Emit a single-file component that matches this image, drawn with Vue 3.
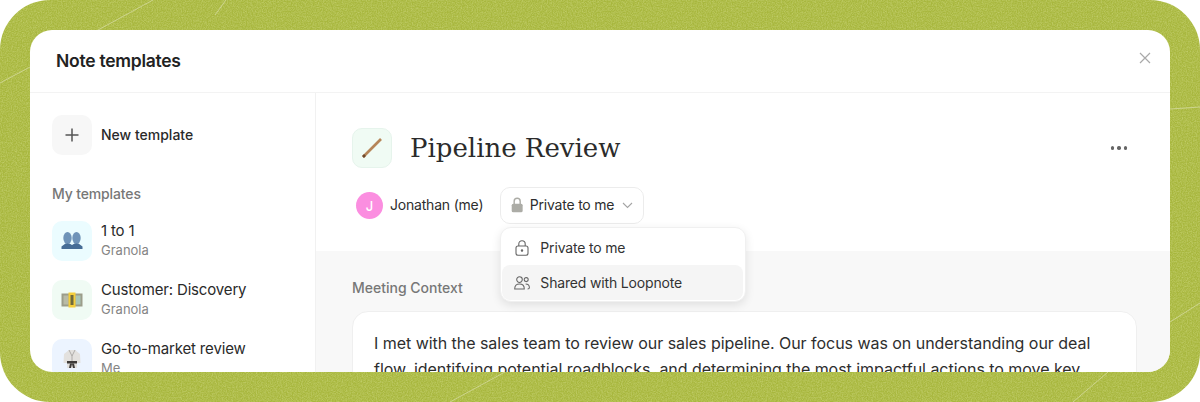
<template>
  <div class="page">
    <svg class="backdrop" width="1200" height="402" aria-hidden="true">
      <filter id="grain" x="0" y="0" width="100%" height="100%">
        <feTurbulence type="fractalNoise" baseFrequency="0.8" numOctaves="2" seed="4" />
        <feColorMatrix type="matrix" values="0 0 0 0 0.95  0 0 0 0 1  0 0 0 0 0.6  1.6 0 0 0 -0.5" />
      </filter>
      <rect width="1200" height="402" filter="url(#grain)" opacity="0.32" />
      <g stroke="#d0d795" stroke-width="0.9" fill="none">
        <path d="M0 83 L30 67" />
        <path d="M98 30 L153 0" />
        <path d="M215 15 L226 0" />
        <path d="M1170 109 L1200 107" />
        <path d="M1170 322 L1200 303" />
        <path d="M1073 402 L1108 372" />
        <path d="M450 402 L505 372" />
      </g>
    </svg>

    <div class="modal">
      <header class="modal-header">
        <h1>Note templates</h1>
        <button class="close" aria-label="Close">
          <svg width="12" height="12" viewBox="0 0 12 12"><path d="M1 1 L11 11 M11 1 L1 11" stroke="#a9a9a9" stroke-width="1.2" fill="none" /></svg>
        </button>
      </header>

      <div class="modal-body">
        <aside class="sidebar">
          <div class="row new-row">
            <div class="tile tile-new">
              <svg width="16" height="16" viewBox="0 0 16 16"><path d="M8 1.5 V14.5 M1.5 8 H14.5" stroke="#555" stroke-width="1.5" fill="none" /></svg>
            </div>
            <span class="new-label">New template</span>
          </div>

          <div class="section-label">My templates</div>

          <div class="template-list">
            <div v-for="t in templates" :key="t.name" class="row">
              <div class="tile" :class="t.tint">
                <svg v-if="t.icon === 'people'" width="22" height="20" viewBox="0 0 22 20">
                  <ellipse cx="6.5" cy="7" rx="4.2" ry="6" fill="#6f93b8" />
                  <ellipse cx="15.5" cy="7" rx="4.2" ry="6" fill="#6f93b8" />
                  <path d="M0.5 18 V15.5 L4.5 12.5 H8.5 L11 14 L13.5 12.5 H17.5 L21.5 15.5 V18 Z" fill="#466d96" />
                </svg>
                <svg v-else-if="t.icon === 'money'" width="22" height="16" viewBox="0 0 22 16">
                  <rect x="0.5" y="1.5" width="21" height="13" fill="#9c9d8a" />
                  <rect x="2.5" y="3.5" width="5" height="9" fill="#b9bba6" />
                  <rect x="14.5" y="3.5" width="5" height="9" fill="#a9c6b6" />
                  <rect x="7.5" y="0.5" width="7" height="15" fill="#f5cf3c" />
                  <rect x="9.5" y="3" width="3" height="10" fill="#6f6a3c" />
                </svg>
                <svg v-else width="18" height="20" viewBox="0 0 18 20">
                  <path d="M6 1 H12 L17 5 L17.5 14 H14 L14 19 H4 L4 14 H0.5 L1 5 Z" fill="#e3e1de" />
                  <path d="M6 1 L9 7 L12 1 M9 7 V13" stroke="#a8a6a3" stroke-width="0.9" fill="none" />
                  <rect x="4" y="12" width="10" height="2.5" fill="#3d3a38" />
                  <path d="M7 14.5 L6 19 H8 L9 15 L10 19 H12 L11 14.5 Z" fill="#3d3a38" />
                </svg>
              </div>
              <div class="meta">
                <div class="name">{{ t.name }}</div>
                <div class="by">{{ t.by }}</div>
              </div>
            </div>
          </div>
        </aside>

        <main class="main">
          <section class="head">
            <div class="title-row">
              <div class="tile tile-mint title-tile">
                <svg width="24" height="24" viewBox="0 0 24 24">
                  <path d="M3 21 L21 3" stroke="#b58558" stroke-width="2.6" fill="none" />
                  <path d="M3 21 L5 19" stroke="#6f4a2c" stroke-width="2.6" fill="none" />
                </svg>
              </div>
              <h2>Pipeline Review</h2>
              <button class="more" aria-label="More">
                <i></i><i></i><i></i>
              </button>
            </div>

            <div class="owner-row">
              <div class="owner">
                <span class="avatar">J</span>
                <span class="owner-name">Jonathan (me)</span>
              </div>
              <div class="picker">
                <button class="pill">
                  <svg width="14" height="18" viewBox="0 0 14 18">
                    <path d="M3.6 8 V4.8 a3.4 3.4 0 0 1 6.8 0 V8" stroke="#acaca6" stroke-width="1.6" fill="none" />
                    <rect x="0.8" y="7.5" width="12.4" height="9.8" rx="1.8" fill="#acaca6" />
                  </svg>
                  <span class="pill-text">Private to me</span>
                  <svg class="chev" width="11" height="7" viewBox="0 0 11 7"><path d="M1 1 L5.5 5.5 L10 1" stroke="#a5a5a5" stroke-width="1.1" fill="none" /></svg>
                </button>
                <div class="menu">
                  <div class="menu-item">
                    <svg width="16" height="16" viewBox="0 0 16 16" fill="none" stroke="#666" stroke-width="1.1">
                      <rect x="2" y="6" width="12" height="9.3" rx="2" />
                      <path d="M4.8 6 V4 a3.2 3.2 0 0 1 6.4 0 V6" />
                      <circle cx="8" cy="10.6" r="0.7" fill="#666" />
                    </svg>
                    <span>Private to me</span>
                  </div>
                  <div class="menu-item active">
                    <svg width="16" height="14" viewBox="0 0 16 14" fill="none" stroke="#666" stroke-width="1.05">
                      <circle cx="5.5" cy="3.6" r="2.8" />
                      <path d="M0.7 12.9 C0.7 9.6 2.6 8 5.5 8 C8.4 8 10.3 9.6 10.3 12.9 Z" />
                      <circle cx="12.2" cy="3.6" r="2" />
                      <path d="M11.6 8 C14 8 15.4 9.4 15.4 11.8 C15.4 12.6 14.8 13 13.6 13" />
                    </svg>
                    <span>Shared with Loopnote</span>
                  </div>
                </div>
              </div>
            </div>
          </section>

          <section class="context">
            <div class="context-label">Meeting Context</div>
            <div class="context-card">
              I met with the sales team to review our sales pipeline. Our focus was on understanding our deal
              flow, identifying potential roadblocks, and determining the most impactful actions to move key
            </div>
          </section>
        </main>
      </div>
    </div>
  </div>
</template>

<script setup>
const templates = [
  { name: '1 to 1', by: 'Granola', tint: 'tile-cyan', icon: 'people' },
  { name: 'Customer: Discovery', by: 'Granola', tint: 'tile-mint', icon: 'money' },
  { name: 'Go-to-market review', by: 'Me', tint: 'tile-blue', icon: 'gi' }
]
</script>

<style>
html, body { background: #fff; }
</style>

<style scoped>
.page {
  position: relative;
  width: 1200px;
  height: 402px;
  box-sizing: border-box;
  padding: 30px;
  border-radius: 50px;
  overflow: hidden;
  background: #a8b73e;
  font-family: Inter, "Noto Sans", sans-serif;
  color: #222;
}
.backdrop { position: absolute; inset: 0; }
.modal {
  position: relative;
  height: 342px;
  display: flex;
  flex-direction: column;
  background: #fff;
  border-radius: 22px;
  overflow: hidden;
}
.modal-header {
  flex: none;
  height: 63px;
  box-sizing: border-box;
  padding: 0 19px 2px 26px;
  display: flex;
  align-items: center;
  justify-content: space-between;
  border-bottom: 1px solid #f3f3f3;
}
h1 { margin: 0; font-size: 17.5px; font-weight: 600; letter-spacing: -0.015em; color: #222; }
button { border: none; background: none; padding: 0; font: inherit; color: inherit; }
.close { display: flex; margin-top: -5px; }
.modal-body { flex: 1; min-height: 0; display: flex; }
.sidebar {
  flex: none;
  width: 286px;
  box-sizing: border-box;
  padding: 22px 22px 0;
  border-right: 1px solid #f1f1f1;
}
.row { display: flex; align-items: center; gap: 9px; }
.tile {
  flex: none;
  width: 40px;
  height: 40px;
  border-radius: 10px;
  display: flex;
  align-items: center;
  justify-content: center;
}
.tile-new { background: #f7f7f7; }
.tile-cyan { background: #ebfcff; }
.tile-mint { background: #f0fbf4; }
.tile-blue { background: #ecf4ff; }
.new-label { margin-top: -2px; font-size: 14px; font-weight: 500; color: #2a2a2a; }
.section-label { margin-top: 30px; font-size: 14px; font-weight: 500; letter-spacing: -0.01em; color: #777; line-height: 17px; }
.template-list { margin-top: 19px; display: flex; flex-direction: column; gap: 19px; }
.meta { display: flex; flex-direction: column; gap: 2px; margin-top: -2px; }
.name { font-size: 15px; line-height: 18px; letter-spacing: -0.16px; color: #2a2a2a; }
.by { font-size: 13px; line-height: 16px; color: #858585; }
.main { flex: 1; min-width: 0; display: flex; flex-direction: column; }
.head { flex: none; height: 158px; box-sizing: border-box; padding: 35px 33px 0 36px; }
.title-row { display: flex; align-items: center; }
.title-tile { border: 1px solid #e6f4ec; box-sizing: border-box; }
h2 {
  flex: 1;
  margin: 0 0 0 18px;
  font-family: "DejaVu Serif", "Liberation Serif", serif;
  font-size: 26px;
  font-weight: 400;
  color: #2b2b2b;
}
.more { display: flex; gap: 3px; margin-right: 10px; }
.more i { width: 3.4px; height: 3.4px; border-radius: 50%; background: #666; }
.owner-row { margin-top: 19px; display: flex; align-items: center; gap: 17px; padding-left: 4px; }
.owner { display: flex; align-items: center; gap: 7px; font-size: 14px; letter-spacing: -0.2px; color: #2e2e2e; }
.owner-name { margin-top: -2px; }
.avatar {
  width: 27px;
  height: 27px;
  border-radius: 50%;
  background: #fb8ee0;
  color: #fff;
  font-size: 13px;
  font-weight: 500;
  display: flex;
  align-items: center;
  justify-content: center;
}
.picker { position: relative; }
.pill {
  width: 144px;
  height: 37px;
  box-sizing: border-box;
  border: 1px solid #ececec;
  border-radius: 10px;
  display: flex;
  align-items: center;
  gap: 6px;
  padding: 0 10px 2px;
  font-size: 14px;
  letter-spacing: -0.2px;
  color: #2e2e2e;
}
.pill-text { white-space: nowrap; }
.chev { flex: none; margin: 2px 0 0 2px; }
.menu {
  position: absolute;
  top: 40px;
  left: 0;
  z-index: 2;
  width: 246px;
  height: 75px;
  box-sizing: border-box;
  padding: 2px 2px 2px 1px;
  background: #fff;
  border: 1px solid #f0f0f0;
  border-radius: 11px;
  box-shadow: 0 3px 10px rgba(0, 0, 0, 0.1);
}
.menu-item {
  height: 35px;
  display: flex;
  align-items: center;
  gap: 10px;
  padding-left: 12px;
  border-radius: 8px;
  font-size: 14px;
  letter-spacing: -0.17px;
  color: #333;
}
.menu-item.active { background: #f5f5f5; height: 35px; }
.context { flex: 1; min-height: 0; background: #f8f8f8; padding: 28px 33px 0 36px; overflow: hidden; }
.context-label { font-size: 14px; font-weight: 500; color: #777; line-height: 17px; }
.context-card {
  margin-top: 15px;
  box-sizing: border-box;
  height: 100px;
  padding: 18px 21px;
  background: #fff;
  border: 1px solid #efefef;
  border-radius: 16px;
  font-size: 16px;
  line-height: 26px;
  letter-spacing: -0.04px;
  color: #2e2e2e;
}
</style>
